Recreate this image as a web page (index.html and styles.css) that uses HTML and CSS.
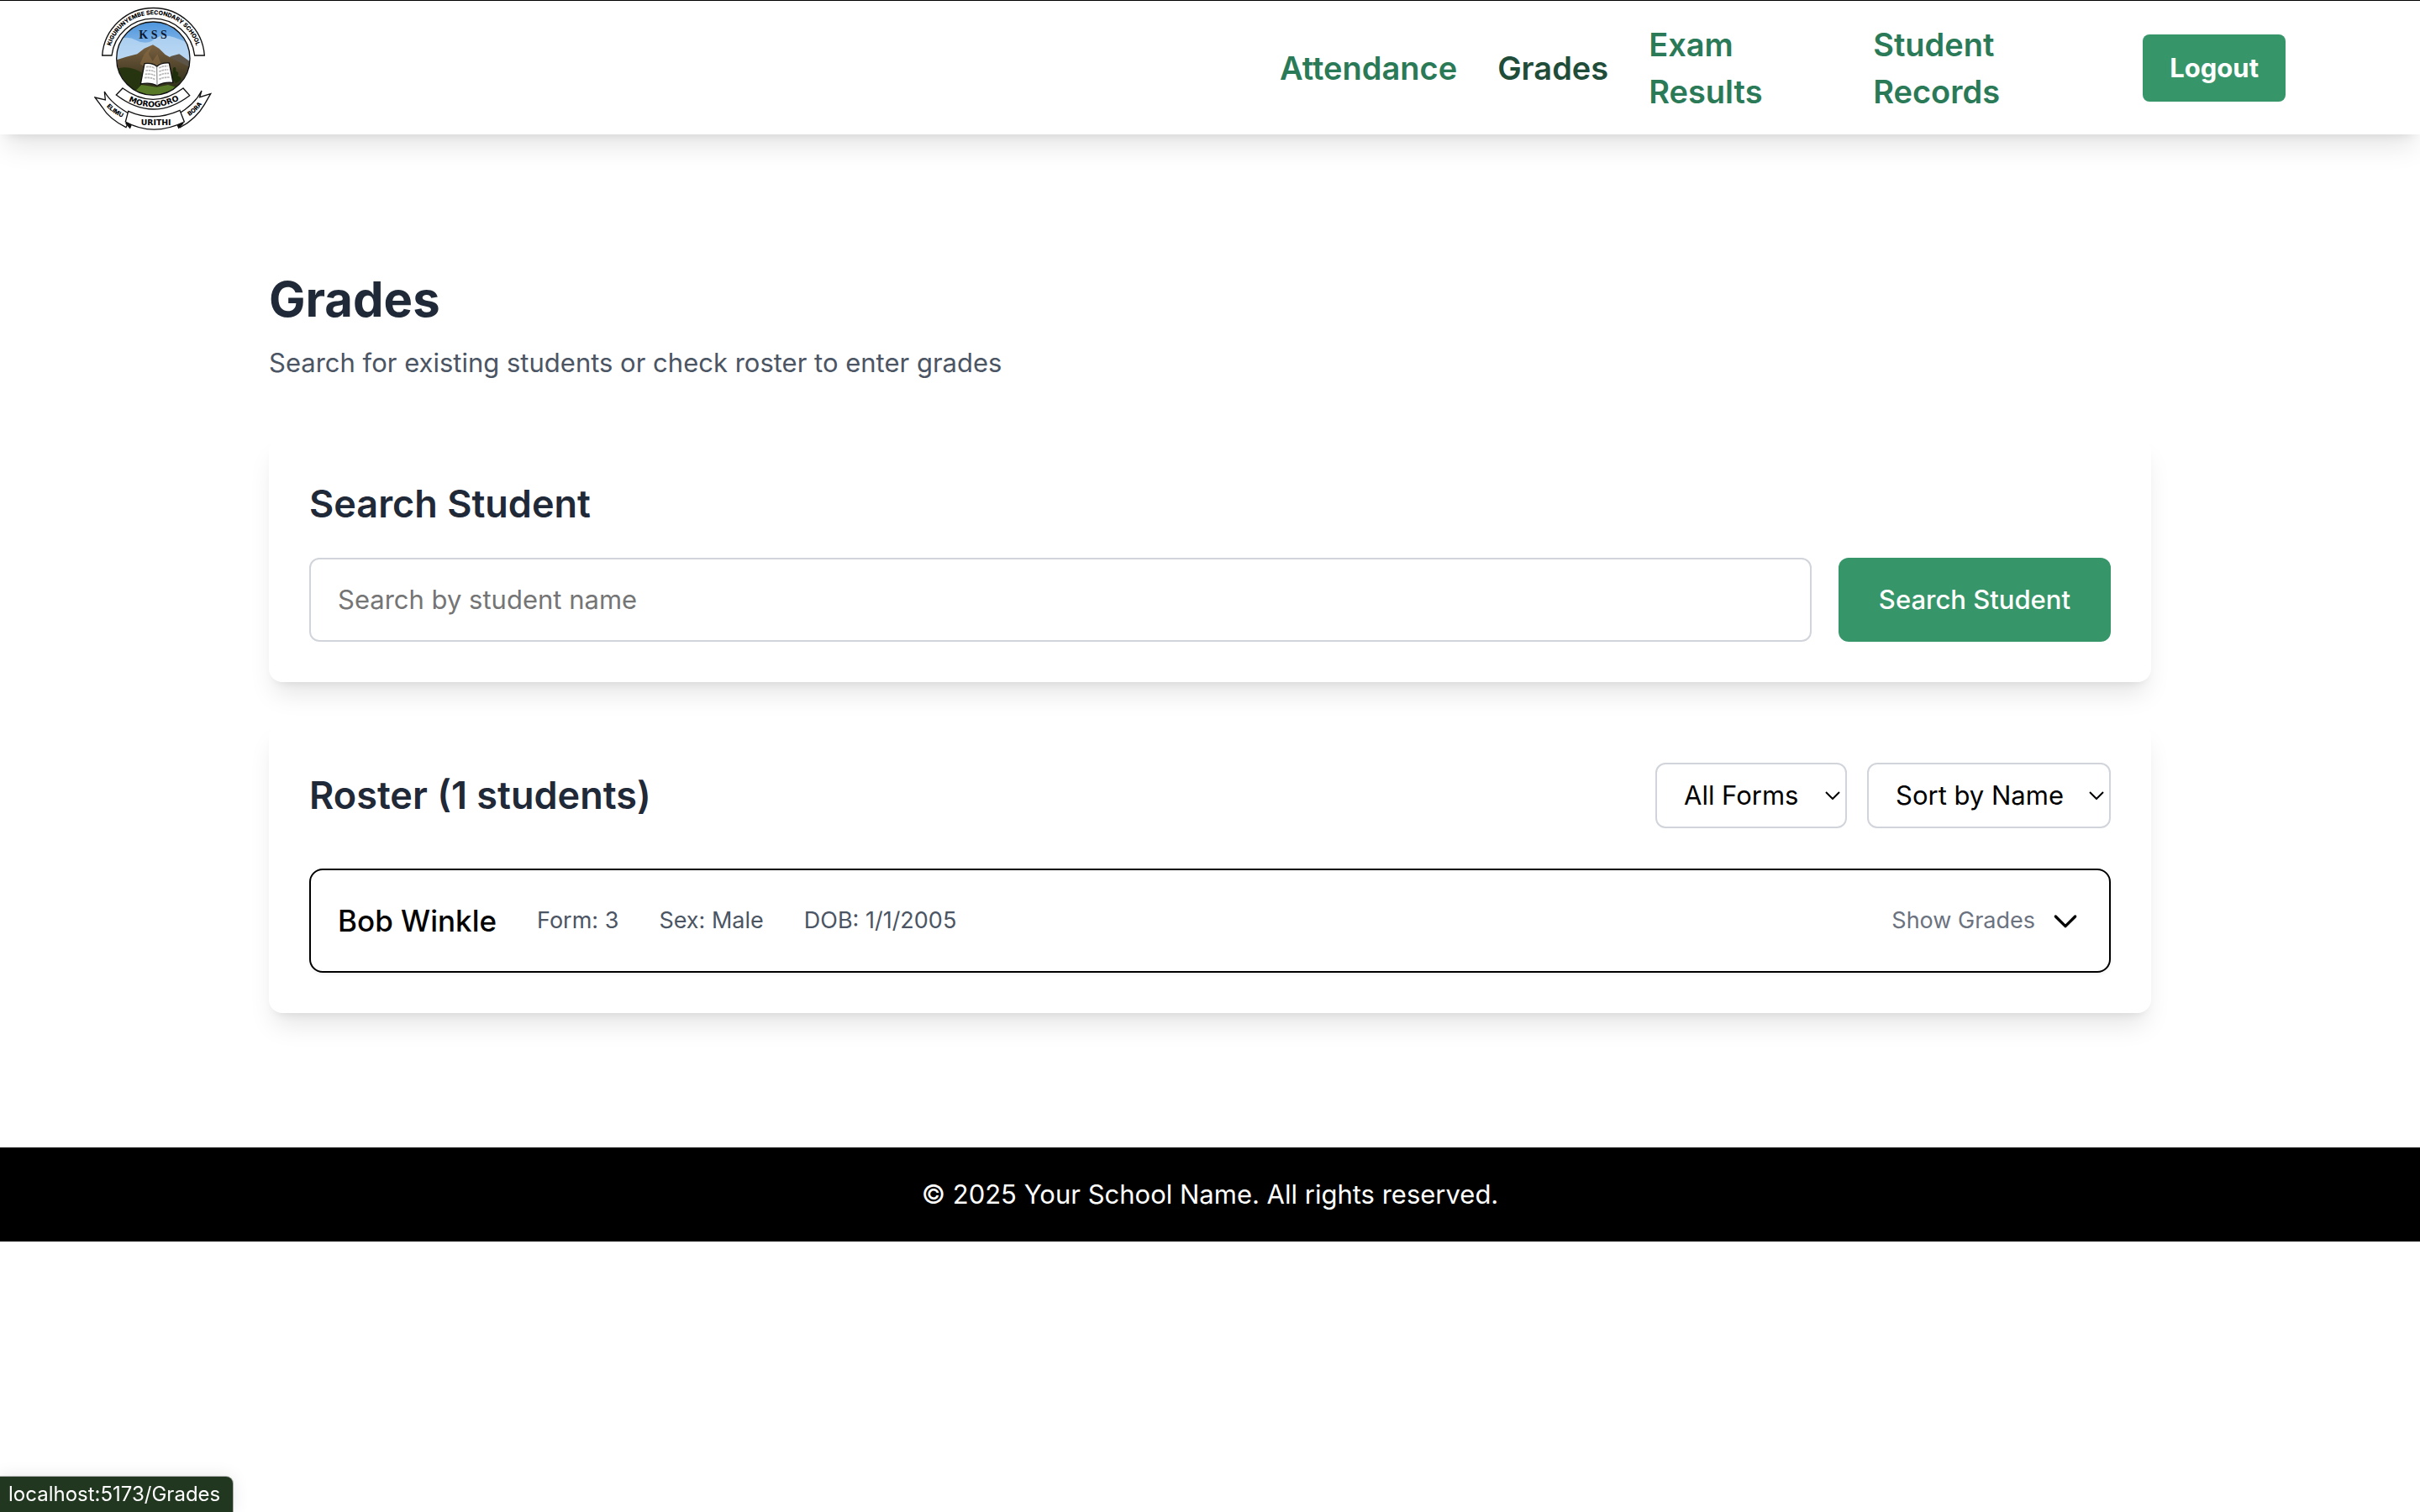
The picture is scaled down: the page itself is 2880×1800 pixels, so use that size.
FILE: index.html
```html
<!DOCTYPE html>
<html lang="en">
<head>
<meta charset="utf-8">
<meta name="viewport" content="width=device-width, initial-scale=1">
<title>Grades</title>
<link rel="stylesheet" href="styles.css">
</head>
<body>
<header class="header">
  <a class="brand" href="#" aria-label="Kigurunyembe Secondary School">
    <svg class="logo" viewBox="36 12 420 456" aria-hidden="true">
      <defs>
        <clipPath id="disc"><circle cx="247" cy="206" r="130"/></clipPath>
        <linearGradient id="sky" x1="0" y1="0" x2="0" y2="1">
          <stop offset="0" stop-color="#4a93dc"/><stop offset="1" stop-color="#a9cdf0"/>
        </linearGradient>
        <linearGradient id="hill" x1="0" y1="0" x2="0" y2="1">
          <stop offset="0" stop-color="#7a6040"/><stop offset=".5" stop-color="#4a4028"/><stop offset="1" stop-color="#20280f"/>
        </linearGradient>
        <path id="arch" d="M91 178A160 160 0 0 1 405 178"/>
        <path id="smile" d="M140 348Q247 412 358 344"/>
        <path id="leftText" d="M74 370Q100 402 144 421"/>
        <path id="rightText" d="M370 416Q404 396 426 362"/>
      </defs>
      <g clip-path="url(#disc)">
        <rect x="110" y="70" width="275" height="150" fill="url(#sky)"/>
        <path d="M110 145Q150 120 185 140T250 138T320 130T390 160V215H110Z" fill="#c5def5" opacity=".7"/>
        <path d="M280 215L312 197L340 190L385 222V340H250Z" fill="#5b5447"/>
        <path d="M105 215L150 200L190 190L215 170L246 157L268 170L290 192L318 208L385 240V345H105Z" fill="url(#hill)"/>
        <path d="M246 157L230 190L245 215L262 190L275 225L240 250L200 225L215 190Z" fill="#8b6a42" opacity=".6"/>
        <path d="M110 245Q160 225 215 262L200 300L260 320L385 290V345H110Z" fill="#26350f"/>
        <path d="M185 320L205 300L260 308L300 300L350 315L300 345H200Z" fill="#587a28"/>
        <path d="M318 240q12 -10 10 12q14 2 6 16q20 6 8 18l-14 8l-14 -14z" fill="#1f2f0c"/>
      </g>
      <circle cx="247" cy="206" r="131" fill="none" stroke="#111" stroke-width="4"/>
      <path d="M216 224Q245 220 260 235Q275 220 304 222L318 292Q285 288 261 303Q238 290 202 297Z" fill="#fff" stroke="#111" stroke-width="4" stroke-linejoin="round"/>
      <path d="M260 235L261 303" stroke="#777" stroke-width="3"/>
      <path d="M222 236Q240 233 253 241M220 249Q240 246 254 254M218 262Q239 259 254 267M216 275Q238 272 254 281M268 240Q282 232 299 233M268 253Q284 245 301 246M268 266Q285 258 304 259M268 280Q286 272 307 273" fill="none" stroke="#b5b5b5" stroke-width="5" stroke-dasharray="8 2"/>
      <path d="M65 195A183 183 0 0 1 430 195H395A149 149 0 0 0 99 195Z" fill="#fff" stroke="#111" stroke-width="4"/>
      <text class="logo-band"><textPath href="#arch" startOffset="50%" text-anchor="middle">KIGURUNYEMBE SECONDARY SCHOOL</textPath></text>
      <text class="logo-kss" x="246" y="134" text-anchor="middle">K S S</text>
      <g fill="#fff" stroke="#111" stroke-width="4" stroke-linejoin="miter">
        <path d="M73 324Q98 369 170 408L150 452Q88 420 66 381L39 345L76 354Z"/>
        <path d="M420 321Q396 370 330 408L343 452Q400 422 430 370L452 332L413 344Z"/>
        <path d="M150 438L164 454L176 425Z" fill="#111"/>
        <path d="M353 438L338 454L326 425Z" fill="#111"/>
        <path d="M138 312Q247 392 354 312L377 338Q247 437 115 336Z"/>
        <path d="M158 394Q247 434 342 391L358 432Q247 487 148 432Z"/>
      </g>
      <text class="logo-wide"><textPath href="#smile" startOffset="50%" text-anchor="middle">MOROGORO</textPath></text>
      <text class="logo-wide" x="257" y="443" text-anchor="middle">URITHI</text>
      <text class="logo-side"><textPath href="#leftText" startOffset="50%" text-anchor="middle">ELIMU</textPath></text>
      <text class="logo-side"><textPath href="#rightText" startOffset="50%" text-anchor="middle">BORA</textPath></text>
    </svg>
  </a>
  <nav class="nav">
    <a class="nav-link" href="#">Attendance</a>
    <a class="nav-link nav-link-active" href="#">Grades</a>
    <a class="nav-link nav-link-exam" href="#">Exam Results</a>
    <a class="nav-link nav-link-records" href="#">Student Records</a>
    <button class="logout" type="button">Logout</button>
  </nav>
</header>

<main class="main">
  <div class="intro">
    <h1 class="title">Grades</h1>
    <p class="subtitle">Search for existing students or check roster to enter grades</p>
  </div>

  <section class="card">
    <h2 class="card-title">Search Student</h2>
    <form class="search">
      <input class="search-input" type="text" placeholder="Search by student name" aria-label="Search by student name">
      <button class="search-button" type="button">Search Student</button>
    </form>
  </section>

  <section class="card">
    <div class="roster-head">
      <h2 class="card-title-inline">Roster (1 students)</h2>
      <div class="filters">
        <div class="select-wrap">
          <select class="select select-forms" aria-label="Form"><option>All Forms</option></select>
          <svg class="select-arrow" viewBox="0 0 18 10" aria-hidden="true"><path d="M1 1l8 8 8-8"/></svg>
        </div>
        <div class="select-wrap">
          <select class="select select-sort" aria-label="Sort order"><option>Sort by Name</option></select>
          <svg class="select-arrow" viewBox="0 0 18 10" aria-hidden="true"><path d="M1 1l8 8 8-8"/></svg>
        </div>
      </div>
    </div>
    <button class="student" type="button" aria-expanded="false">
      <span class="student-info">
        <span class="student-name">Bob Winkle</span>
        <span>Form: 3</span>
        <span>Sex: Male</span>
        <span>DOB: 1/1/2005</span>
      </span>
      <span class="student-toggle">
        <span>Show Grades</span>
        <svg class="chevron" viewBox="0 0 24 24" aria-hidden="true"><path d="M19 9l-7 7-7-7"/></svg>
      </span>
    </button>
  </section>
</main>

<footer class="footer"><p>© 2025 Your School Name. All rights reserved.</p></footer>
<div class="status">localhost:5173/Grades</div>
</body>
</html>
```
FILE: styles.css
```css
* { box-sizing: border-box; }

body {
  margin: 0;
  background: #fff;
  color: #000;
  font-family: Inter, "Liberation Sans", sans-serif;
  font-size: 31px;
  line-height: 48px;
}

h1, h2, p { margin: 0; }
button, input, select { font: inherit; }
button { cursor: pointer; }

.header {
  display: flex;
  align-items: center;
  justify-content: space-between;
  height: 160px;
  padding: 0 160px 0 112px;
  border-top: 1px solid #000;
  background: #fff;
  box-shadow: 0 20px 30px -6px rgba(0, 0, 0, .1), 0 8px 12px -8px rgba(0, 0, 0, .1);
}

.brand { display: block; }
.logo { display: block; width: 140px; height: 152px; }
.logo-band { font: 800 21px Inter, sans-serif; }
.logo-kss { font: 700 42px "Liberation Serif", serif; fill: #0c1830; }
.logo-wide { font: 700 28px "DejaVu Sans", sans-serif; }
.logo-side { font: 800 22px Inter, sans-serif; }

.nav { display: flex; align-items: center; gap: 48px; }
.nav-link {
  color: #2b7a57;
  font-size: 38px;
  font-weight: 600;
  line-height: 56px;
  text-decoration: none;
}
.nav-link-active { color: #1f4d3a; }
.nav-link-exam { width: 219px; }
.nav-link-records { width: 273px; }

.logout {
  padding: 16px 32px;
  border: 0;
  border-radius: 8px;
  background: #379669;
  color: #fff;
  font-weight: 700;
}

.main {
  display: flex;
  flex-direction: column;
  gap: 48px;
  padding: 160px 320px;
}

.intro { padding-bottom: 16px; }
.title {
  margin-bottom: 16px;
  color: #1f2937;
  font-size: 58px;
  font-weight: 700;
  line-height: 72px;
}
.subtitle { color: #4b5563; }

.card {
  padding: 48px;
  border-radius: 16px;
  background: #fff;
  box-shadow: 0 20px 30px -6px rgba(0, 0, 0, .1), 0 8px 12px -8px rgba(0, 0, 0, .1);
}
.card-title, .card-title-inline {
  color: #1f2937;
  font-size: 45px;
  font-weight: 600;
  line-height: 64px;
}
.card-title { margin-bottom: 32px; }

.search { display: flex; gap: 32px; }
.search-input {
  flex: 1;
  min-width: 0;
  padding: 24px 32px;
  border: 2px solid #d1d5db;
  border-radius: 12px;
  background: #fff;
}
.search-input::placeholder { color: #757575; }
.search-button {
  padding: 24px 48px;
  border: 0;
  border-radius: 12px;
  background: #379669;
  color: #fff;
  font-weight: 500;
}

.roster-head {
  display: flex;
  align-items: center;
  justify-content: space-between;
  margin-bottom: 48px;
}
.filters { display: flex; gap: 24px; }
.select-wrap { position: relative; }
.select {
  display: block;
  height: 78px;
  padding: 0 32px;
  border: 2px solid #d1d5db;
  border-radius: 12px;
  background: #fff;
  color: #000;
  appearance: none;
}
.select-forms { width: 228px; }
.select-sort { width: 290px; }
.select-arrow {
  position: absolute;
  top: 34px;
  right: 8px;
  width: 18px;
  height: 10px;
  fill: none;
  stroke: #000;
  stroke-width: 2;
  pointer-events: none;
}

.student {
  display: flex;
  align-items: center;
  justify-content: space-between;
  width: 100%;
  padding: 32px;
  border: 2px solid #000;
  border-radius: 16px;
  background: #fff;
  box-shadow: 0 2px 4px rgba(0, 0, 0, .05);
  color: #4b5563;
  font-size: 27px;
  line-height: 40px;
}
.student-info { display: flex; align-items: center; gap: 48px; }
.student-name {
  color: #000;
  font-size: 35px;
  font-weight: 500;
  line-height: 56px;
}
.student-toggle { display: flex; align-items: center; gap: 16px; color: #6b7280; }
.chevron {
  width: 40px;
  height: 40px;
  fill: none;
  stroke: #000;
  stroke-width: 2;
  stroke-linecap: round;
  stroke-linejoin: round;
}

.footer {
  padding: 32px;
  background: #000;
  color: #fff;
  text-align: center;
}

.status {
  position: fixed;
  bottom: 0;
  left: 0;
  padding: 5px 15px 5px 10px;
  border-radius: 0 8px 0 0;
  background: #21371f;
  box-shadow: 0 0 20px rgba(0, 0, 0, .1), 0 0 0 1px rgba(0, 0, 0, .3);
  color: #fff;
  font-size: 24px;
  line-height: 32px;
}
```
